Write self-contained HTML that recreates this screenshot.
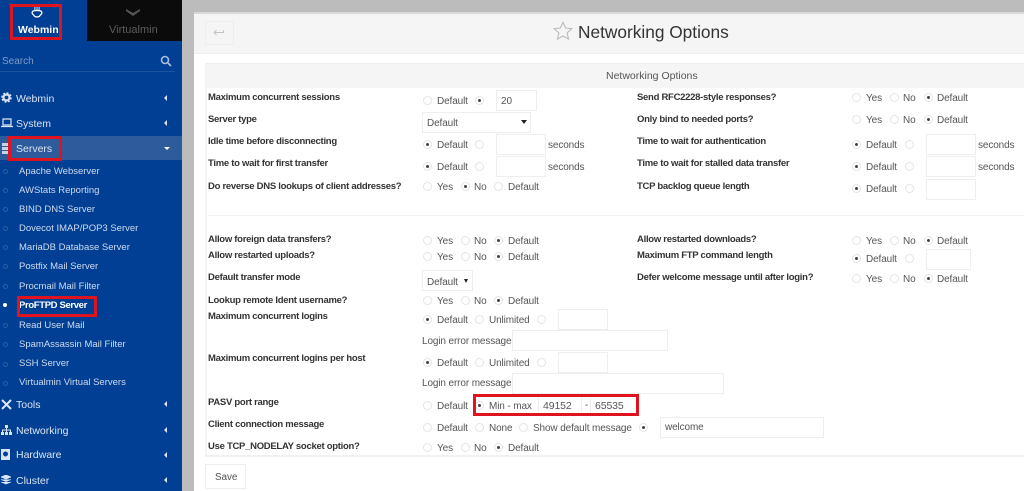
<!DOCTYPE html>
<html><head><meta charset="utf-8"><title>Networking Options</title>
<style>
html,body{margin:0;padding:0;width:1024px;height:491px;overflow:hidden;background:#fff;font-family:"Liberation Sans",sans-serif}
div,span,svg{position:absolute;display:block}
.t{height:14px;line-height:14px;font-size:10px;color:#555;white-space:nowrap;margin-top:2px;letter-spacing:-.12px}
.l{height:14px;line-height:14px;font-size:9.5px;font-weight:bold;color:#333;white-space:nowrap;left:208px;margin-top:1px;letter-spacing:-.28px}
.l.x{left:637px}
.r{width:7px;height:7px;border:1px solid #e4e4e4;border-radius:50%;background:#fff}
.r.o:after{content:"";position:absolute;left:2px;top:2px;width:3px;height:3px;border-radius:50%;background:#444}
.i{border:1px solid #eee;background:#fff;box-sizing:border-box}
.m{height:14px;line-height:14px;font-size:10.5px;color:#dbe4f2;left:16px;white-space:nowrap;margin-top:1px}
.s{height:14px;line-height:14px;font-size:9.5px;color:#cfdbee;left:19px;white-space:nowrap;margin-top:1px}
.a{left:164px;width:0;height:0;border-top:3px solid transparent;border-bottom:3px solid transparent;border-right:3px solid #dbe4f2}
.d{left:3px;width:3px;height:3px;border:1px solid #2f5ea3;border-radius:50%}
.b{border:3px solid #e0141e;box-sizing:border-box}
</style></head><body>
<div style="left:182px;top:0;width:842px;height:12px;background:#bcbcbc"></div>
<div style="left:182px;top:0;width:12px;height:491px;background:#bcbcbc"></div>
<div style="left:194px;top:12px;width:830px;height:2px;background:#d8d8d8"></div>
<div style="left:194px;top:14px;width:830px;height:39px;background:#f5f5f5;border-bottom:1px solid #eee"></div>
<div class="i" style="left:205px;top:21px;width:29px;height:24px;background:#f5f5f5"></div>
<svg style="left:213px;top:29px" width="11" height="7" viewBox="0 0 11 7"><path d="M10.500 1v2.500H1M3.500 1L1 3.500 3.500 6" fill="none" stroke="#c4c4c4" stroke-width="1"/></svg>
<svg style="left:553px;top:21px" width="20" height="19" viewBox="0 0 20 19"><path d="M10 1.2l2.6 5.8 6.2.7-4.6 4.2 1.3 6.2-5.500-3.200-5.500 3.200 1.300-6.200L1.200 7.700l6.200-.7z" fill="none" stroke="#bbb" stroke-width="1.100"/></svg>
<div style="left:578px;top:20px;height:24px;line-height:24px;font-size:17.300px;color:#333;white-space:nowrap">Networking Options</div>
<div style="left:205px;top:63px;width:819px;height:25px;background:#f5f5f5;border-top:1px solid #eee;box-sizing:border-box"></div>
<div style="left:205px;top:88px;width:2px;height:368px;background:#f5f5f5"></div>
<div style="left:205px;top:455px;width:819px;height:2px;background:#f1f1f1"></div>
<div style="left:207px;top:215px;width:817px;height:1px;background:#f3f3f3"></div>
<div class="t" style="left:606px;top:67px;font-size:10.500px;letter-spacing:0">Networking Options</div>

<div class="l" style="top:90px">Maximum concurrent sessions</div>
<div class="l" style="top:112px">Server type</div>
<div class="l" style="top:134px">Idle time before disconnecting</div>
<div class="l" style="top:156px">Time to wait for first transfer</div>
<div class="l" style="top:179px">Do reverse DNS lookups of client addresses?</div>
<div class="l x" style="top:90px">Send RFC2228-style responses?</div>
<div class="l x" style="top:112px">Only bind to needed ports?</div>
<div class="l x" style="top:134px">Time to wait for authentication</div>
<div class="l x" style="top:156px">Time to wait for stalled data transfer</div>
<div class="l x" style="top:179px">TCP backlog queue length</div>
<div class="l" style="top:232px">Allow foreign data transfers?</div>
<div class="l" style="top:248px">Allow restarted uploads?</div>
<div class="l" style="top:270px">Default transfer mode</div>
<div class="l" style="top:293px">Lookup remote Ident username?</div>
<div class="l" style="top:309px">Maximum concurrent logins</div>
<div class="l" style="top:351px">Maximum concurrent logins per host</div>
<div class="l" style="top:395px">PASV port range</div>
<div class="l" style="top:417px">Client connection message</div>
<div class="l" style="top:439px">Use TCP_NODELAY socket option?</div>
<div class="l x" style="top:232px">Allow restarted downloads?</div>
<div class="l x" style="top:248px">Maximum FTP command length</div>
<div class="l x" style="top:270px">Defer welcome message until after login?</div>

<div class="r" style="left:423px;top:96px"></div><div class="t" style="left:437px;top:93px">Default</div><div class="r o" style="left:475px;top:96px"></div>
<div class="i" style="left:496px;top:90px;width:41px;height:21px"></div><div class="t" style="left:501px;top:93px">20</div>
<div class="i" style="left:422px;top:112px;width:109px;height:21px"></div><div class="t" style="left:427px;top:115px">Default</div>
<div style="left:521px;top:120px;width:0;height:0;border-left:3px solid transparent;border-right:3px solid transparent;border-top:4px solid #222"></div>
<div class="r o" style="left:423px;top:140px"></div><div class="t" style="left:437px;top:137px">Default</div><div class="r" style="left:475px;top:140px"></div>
<div class="i" style="left:496px;top:134px;width:50px;height:21px"></div><div class="t" style="left:548px;top:137px">seconds</div>
<div class="r o" style="left:423px;top:162px"></div><div class="t" style="left:437px;top:159px">Default</div><div class="r" style="left:475px;top:162px"></div>
<div class="i" style="left:496px;top:156px;width:50px;height:21px"></div><div class="t" style="left:548px;top:159px">seconds</div>
<div class="r" style="left:423px;top:182px"></div><div class="t" style="left:437px;top:179px">Yes</div><div class="r o" style="left:461px;top:182px"></div><div class="t" style="left:474px;top:179px">No</div><div class="r" style="left:494px;top:182px"></div><div class="t" style="left:508px;top:179px">Default</div>

<div class="r" style="left:852px;top:93px"></div><div class="t" style="left:866px;top:90px">Yes</div><div class="r" style="left:890px;top:93px"></div><div class="t" style="left:903px;top:90px">No</div><div class="r o" style="left:924px;top:93px"></div><div class="t" style="left:937px;top:90px">Default</div>
<div class="r" style="left:852px;top:115px"></div><div class="t" style="left:866px;top:112px">Yes</div><div class="r" style="left:890px;top:115px"></div><div class="t" style="left:903px;top:112px">No</div><div class="r o" style="left:924px;top:115px"></div><div class="t" style="left:937px;top:112px">Default</div>
<div class="r o" style="left:852px;top:140px"></div><div class="t" style="left:866px;top:137px">Default</div><div class="r" style="left:905px;top:140px"></div>
<div class="i" style="left:926px;top:134px;width:50px;height:21px"></div><div class="t" style="left:978px;top:137px">seconds</div>
<div class="r o" style="left:852px;top:162px"></div><div class="t" style="left:866px;top:159px">Default</div><div class="r" style="left:905px;top:162px"></div>
<div class="i" style="left:926px;top:156px;width:50px;height:21px"></div><div class="t" style="left:978px;top:159px">seconds</div>
<div class="r o" style="left:852px;top:184px"></div><div class="t" style="left:866px;top:181px">Default</div><div class="r" style="left:905px;top:184px"></div>
<div class="i" style="left:926px;top:179px;width:50px;height:21px"></div>

<div class="r" style="left:423px;top:236px"></div><div class="t" style="left:437px;top:233px">Yes</div><div class="r" style="left:461px;top:236px"></div><div class="t" style="left:474px;top:233px">No</div><div class="r o" style="left:494px;top:236px"></div><div class="t" style="left:508px;top:233px">Default</div>
<div class="r" style="left:423px;top:252px"></div><div class="t" style="left:437px;top:249px">Yes</div><div class="r" style="left:461px;top:252px"></div><div class="t" style="left:474px;top:249px">No</div><div class="r o" style="left:494px;top:252px"></div><div class="t" style="left:508px;top:249px">Default</div>
<div class="i" style="left:422px;top:270px;width:51px;height:21px"></div><div class="t" style="left:427px;top:274px">Default</div>
<div style="left:464px;top:279px;width:0;height:0;border-left:2.500px solid transparent;border-right:2.500px solid transparent;border-top:4px solid #222"></div>
<div class="r" style="left:423px;top:296px"></div><div class="t" style="left:437px;top:293px">Yes</div><div class="r" style="left:461px;top:296px"></div><div class="t" style="left:474px;top:293px">No</div><div class="r o" style="left:494px;top:296px"></div><div class="t" style="left:508px;top:293px">Default</div>
<div class="r o" style="left:423px;top:315px"></div><div class="t" style="left:437px;top:312px">Default</div><div class="r" style="left:475px;top:315px"></div><div class="t" style="left:489px;top:312px">Unlimited</div><div class="r" style="left:537px;top:315px"></div>
<div class="i" style="left:558px;top:309px;width:50px;height:21px"></div>
<div class="t" style="left:422px;top:333px">Login error message</div><div class="i" style="left:512px;top:330px;width:156px;height:21px"></div>
<div class="r o" style="left:423px;top:358px"></div><div class="t" style="left:437px;top:355px">Default</div><div class="r" style="left:475px;top:358px"></div><div class="t" style="left:489px;top:355px">Unlimited</div><div class="r" style="left:537px;top:358px"></div>
<div class="i" style="left:558px;top:352px;width:50px;height:21px"></div>
<div class="t" style="left:422px;top:375px">Login error message</div><div class="i" style="left:512px;top:373px;width:212px;height:21px"></div>
<div class="r" style="left:423px;top:401px"></div><div class="t" style="left:437px;top:398px">Default</div>
<div style="left:538px;top:397px;width:1px;height:17px;background:#eee"></div><div style="left:581px;top:397px;width:1px;height:17px;background:#eee"></div><div style="left:590px;top:397px;width:1px;height:17px;background:#eee"></div>
<div class="r o" style="left:475px;top:401px"></div><div class="t" style="left:489px;top:398px">Min - max</div><div class="t" style="left:543px;top:397px;font-size:10.500px">49152</div><div class="t" style="left:585px;top:397px">-</div><div class="t" style="left:595px;top:397px;font-size:10.500px">65535</div>
<div class="b" style="left:473px;top:394px;width:166px;height:22px"></div>
<div class="r" style="left:423px;top:423px"></div><div class="t" style="left:437px;top:420px">Default</div><div class="r" style="left:475px;top:423px"></div><div class="t" style="left:489px;top:420px">None</div><div class="r" style="left:519px;top:423px"></div><div class="t" style="left:533px;top:420px">Show default message</div><div class="r o" style="left:639px;top:423px"></div>
<div class="i" style="left:660px;top:417px;width:164px;height:21px"></div><div class="t" style="left:665px;top:419px">welcome</div>
<div class="r" style="left:423px;top:443px"></div><div class="t" style="left:437px;top:440px">Yes</div><div class="r" style="left:461px;top:443px"></div><div class="t" style="left:474px;top:440px">No</div><div class="r o" style="left:494px;top:443px"></div><div class="t" style="left:508px;top:440px">Default</div>

<div class="r" style="left:852px;top:236px"></div><div class="t" style="left:866px;top:233px">Yes</div><div class="r" style="left:890px;top:236px"></div><div class="t" style="left:903px;top:233px">No</div><div class="r o" style="left:924px;top:236px"></div><div class="t" style="left:937px;top:233px">Default</div>
<div class="r o" style="left:852px;top:254px"></div><div class="t" style="left:866px;top:251px">Default</div><div class="r" style="left:905px;top:254px"></div>
<div class="i" style="left:926px;top:249px;width:45px;height:21px"></div>
<div class="r" style="left:852px;top:274px"></div><div class="t" style="left:866px;top:271px">Yes</div><div class="r" style="left:890px;top:274px"></div><div class="t" style="left:903px;top:271px">No</div><div class="r o" style="left:924px;top:274px"></div><div class="t" style="left:937px;top:271px">Default</div>

<div class="i" style="left:205px;top:464px;width:41px;height:25px"></div><div class="t" style="left:215px;top:469px">Save</div>

<div style="left:0;top:0;width:182px;height:491px;background:#003f94"></div>
<div style="left:87px;top:0;width:95px;height:41px;background:#0b0b0b"></div>
<svg style="left:125px;top:8px" width="16" height="9" viewBox="0 0 16 9"><path d="M1 1l7 4 7-4v2L8 8 1 3z" fill="#555"/></svg>
<div style="left:109px;top:23px;height:14px;line-height:14px;font-size:11px;color:#5c5c5c;white-space:nowrap">Virtualmin</div>
<svg style="left:30px;top:7px" width="14" height="11" viewBox="0 0 14 13"><path d="M4.500 0v3.500M7 0v3.500M9.500 0v3.500" stroke="#fff" stroke-width="1" fill="none"/><path d="M3.500 4.500C1.500 4.500.8 6.500 1.600 8c.7 1.200 2 1.300 2.400 3 1.300 1 4.700 1 6 0 .4-1.700 1.700-1.800 2.400-3 .8-1.500.1-3.500-1.900-3.500-2-.5-5-.5-7 0z" fill="none" stroke="#fff" stroke-width="1.500"/></svg>
<div style="left:18px;top:23px;height:14px;line-height:14px;font-size:10.500px;font-weight:bold;color:#fff;white-space:nowrap">Webmin</div>
<div class="b" style="left:10px;top:4px;width:52px;height:36px"></div>
<div style="left:2px;top:55px;height:14px;line-height:14px;font-size:10px;color:#7f9cc9">Search</div>
<svg style="left:160px;top:55px" width="12" height="12" viewBox="0 0 12 12"><circle cx="5" cy="5" r="3.500" fill="none" stroke="#a9bedd" stroke-width="1.600"/><path d="M8 8l3 3" stroke="#a9bedd" stroke-width="1.800"/></svg>
<div style="left:0;top:71px;width:175px;height:1px;background:#1c559f"></div>

<div style="left:0;top:136px;width:182px;height:24px;background:#2d5b9c"></div>
<svg style="left:1px;top:92px" width="11" height="11" viewBox="0 0 11 11"><circle cx="5.500" cy="5.500" r="3" fill="none" stroke="#dbe4f2" stroke-width="2.200"/><circle cx="5.500" cy="5.500" r="4.600" fill="none" stroke="#dbe4f2" stroke-width="1.400" stroke-dasharray="2 1.600"/></svg>
<div class="m" style="top:91px">Webmin</div><div class="a" style="top:95px"></div>
<svg style="left:1px;top:118px" width="12" height="10" viewBox="0 0 12 10"><path d="M2 1h8v6H2zM0 8.500h12" fill="none" stroke="#dbe4f2" stroke-width="1.200"/></svg>
<div class="m" style="top:116px">System</div><div class="a" style="top:120px"></div>
<svg style="left:2px;top:143px" width="6" height="11" viewBox="0 0 6 11"><path d="M0 0h6v3H0zM0 4h6v3H0zM0 8h6v3H0z" fill="#c6d2e6"/></svg>
<div class="m" style="top:141px">Servers</div>
<div style="left:164px;top:147px;width:0;height:0;border-left:3px solid transparent;border-right:3px solid transparent;border-top:3px solid #fff"></div>
<div class="b" style="left:8px;top:136px;width:54px;height:25px"></div>

<div class="d" style="top:169px"></div><div class="s" style="top:164px">Apache Webserver</div>
<div class="d" style="top:188px"></div><div class="s" style="top:183px">AWStats Reporting</div>
<div class="d" style="top:207px"></div><div class="s" style="top:202px">BIND DNS Server</div>
<div class="d" style="top:226px"></div><div class="s" style="top:221px">Dovecot IMAP/POP3 Server</div>
<div class="d" style="top:245px"></div><div class="s" style="top:240px">MariaDB Database Server</div>
<div class="d" style="top:264px"></div><div class="s" style="top:259px">Postfix Mail Server</div>
<div class="d" style="top:284px"></div><div class="s" style="top:279px">Procmail Mail Filter</div>
<div style="left:3px;top:303px;width:4px;height:4px;border-radius:50%;background:#fff"></div><div class="s" style="top:298px;color:#fff;font-weight:bold;letter-spacing:-.35px">ProFTPD Server</div>
<div class="b" style="left:17px;top:296px;width:80px;height:21px"></div>
<div class="d" style="top:323px"></div><div class="s" style="top:318px">Read User Mail</div>
<div class="d" style="top:342px"></div><div class="s" style="top:337px">SpamAssassin Mail Filter</div>
<div class="d" style="top:362px"></div><div class="s" style="top:356px">SSH Server</div>
<div class="d" style="top:381px"></div><div class="s" style="top:375px">Virtualmin Virtual Servers</div>

<svg style="left:1px;top:399px" width="11" height="11" viewBox="0 0 11 11"><path d="M1 1l9 9M10 1L1 10" stroke="#dbe4f2" stroke-width="2"/></svg>
<div class="m" style="top:397px">Tools</div><div class="a" style="top:401px"></div>
<svg style="left:1px;top:425px" width="11" height="11" viewBox="0 0 11 11"><path d="M4 0h3v3H4zM0 7h3v3H0zM4 7h3v3H4zM8 7h3v3H8z" fill="#dbe4f2"/><path d="M1.500 7V5h8v2M5.500 3v4" stroke="#dbe4f2" fill="none"/></svg>
<div class="m" style="top:423px">Networking</div><div class="a" style="top:427px"></div>
<svg style="left:1px;top:449px" width="9" height="11" viewBox="0 0 9 11"><path d="M0 0h9v11H0zM4.500 2.500a2.500 2.500 0 100 5 2.500 2.500 0 000-5z" fill="#dbe4f2" fill-rule="evenodd"/></svg>
<div class="m" style="top:447px">Hardware</div><div class="a" style="top:452px"></div>
<svg style="left:1px;top:475px" width="10" height="10" viewBox="0 0 10 10"><path d="M5 0l5 2-5 2-5-2zM0 4.500l5 2 5-2M0 7l5 2 5-2" fill="#dbe4f2" stroke="#dbe4f2" stroke-width=".7"/></svg>
<div class="m" style="top:473px">Cluster</div><div class="a" style="top:477px"></div>
</body></html>
